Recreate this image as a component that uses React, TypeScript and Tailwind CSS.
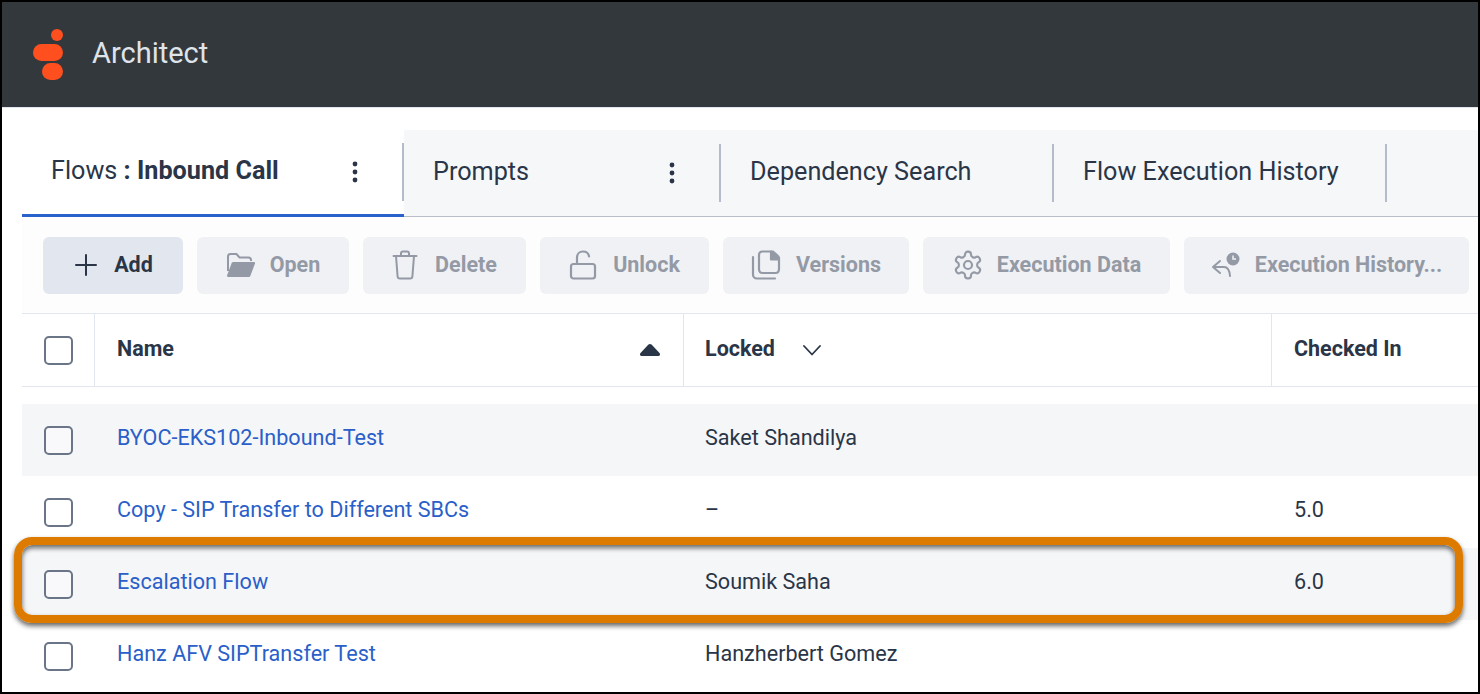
const Logo = () => (
  <svg width="32" height="52" viewBox="0 0 32 52" className="shrink-0">
    <circle cx="24" cy="6" r="6" fill="#ff4f1f" />
    <rect x="0" y="15" width="30" height="17" rx="8.5" fill="#ff4f1f" />
    <rect x="9" y="34" width="21" height="17" rx="8.5" fill="#ff4f1f" />
  </svg>
);

const Kebab = () => (
  <svg width="6" height="22" viewBox="0 0 6 22" className="shrink-0">
    <circle cx="3" cy="3" r="2.4" fill="#2a3547" />
    <circle cx="3" cy="11" r="2.4" fill="#2a3547" />
    <circle cx="3" cy="19" r="2.4" fill="#2a3547" />
  </svg>
);

const PlusIcon = () => (
  <svg width="22" height="22" viewBox="0 0 22 22" fill="none" stroke="#2a3547" strokeWidth="2" strokeLinecap="round">
    <path d="M11 1v20M1 11h20" />
  </svg>
);

const FolderIcon = () => (
  <svg width="30" height="28" viewBox="0 0 30 28" fill="none">
    <path d="M2 20V5.5C2 4 3 3 4.5 3h6l3 3.5h9c1.5 0 2.5 1 2.5 2.5v1" stroke="#949aa5" strokeWidth="2" />
    <path d="M1 24.5c0 1 .8 1.5 1.7 1.5h19.8c1 0 1.6-.5 2-1.5L29 12.5c.3-1-.3-1.5-1.2-1.5H7.5c-1 0-1.6.5-2 1.5L1 24.5z" fill="#949aa5" />
  </svg>
);

const TrashIcon = () => (
  <svg width="26" height="30" viewBox="0 0 26 30" fill="none" stroke="#949aa5" strokeWidth="2" strokeLinecap="round" strokeLinejoin="round">
    <path d="M1.5 6h23" />
    <path d="M9 6V3.5C9 2 10 1.5 11 1.5h4c1 0 2 .5 2 2V6" />
    <path d="M4 6l1.6 20.5c.1 1.2 1 2 2.2 2h10.4c1.2 0 2.1-.8 2.2-2L22 6" />
  </svg>
);

const UnlockIcon = () => (
  <svg width="28" height="30" viewBox="0 0 28 30" fill="none" stroke="#949aa5" strokeWidth="2.2" strokeLinecap="round" strokeLinejoin="round">
    <rect x="2" y="14" width="24" height="14.5" rx="2.5" />
    <path d="M8 14V7.5C8 4 10.5 1.5 14 1.5s5.6 2 6 4.8" />
  </svg>
);

const VersionsIcon = () => (
  <svg width="30" height="30" viewBox="0 0 30 30" fill="none" stroke="#949aa5" strokeWidth="2.2" strokeLinejoin="round">
    <path d="M2 7v17.5C2 26.5 3.5 28.5 6 28.5h18" strokeLinecap="round" />
    <path d="M8 5c0-2 1.2-3.5 3.500-3.5H20l8 8V19c0 2.200-1.300 4-3.500 4h-13C9.300 23 8 21.200 8 19V5z" />
    <path d="M20 1.500h2c0 0 6 5 6 6v2h-8z" fill="#949aa5" />
  </svg>
);

const GearIcon = () => (
  <svg width="32" height="32" viewBox="0 0 24 24" fill="none" stroke="#949aa5" strokeWidth="1.6" strokeLinecap="round" strokeLinejoin="round">
    <path d="M12.22 2h-.44a2 2 0 0 0-2 2v.18a2 2 0 0 1-1 1.73l-.43.25a2 2 0 0 1-2 0l-.15-.08a2 2 0 0 0-2.73.73l-.22.38a2 2 0 0 0 .73 2.73l.15.1a2 2 0 0 1 1 1.72v.51a2 2 0 0 1-1 1.74l-.15.09a2 2 0 0 0-.73 2.73l.22.38a2 2 0 0 0 2.73.73l.15-.08a2 2 0 0 1 2 0l.43.25a2 2 0 0 1 1 1.73V20a2 2 0 0 0 2 2h.44a2 2 0 0 0 2-2v-.18a2 2 0 0 1 1-1.73l.43-.25a2 2 0 0 1 2 0l.15.08a2 2 0 0 0 2.73-.73l.22-.39a2 2 0 0 0-.73-2.73l-.15-.08a2 2 0 0 1-1-1.74v-.5a2 2 0 0 1 1-1.74l.15-.09a2 2 0 0 0 .73-2.73l-.22-.38a2 2 0 0 0-2.73-.73l-.15.08a2 2 0 0 1-2 0l-.43-.25a2 2 0 0 1-1-1.73V4a2 2 0 0 0-2-2z" />
    <circle cx="12" cy="12" r="3" />
  </svg>
);

const HistoryIcon = () => (
  <svg width="30" height="26" viewBox="0 0 30 26" fill="none">
    <path d="M9 9l-7 6 7 6M2 15h11c3.500 0 5.500 3 6 9" stroke="#949aa5" strokeWidth="2" strokeLinecap="round" strokeLinejoin="round" />
    <circle cx="22" cy="7" r="6.500" fill="#949aa5" />
    <path d="M22 3.500V7h3" stroke="#f0f1f5" strokeWidth="1.500" fill="none" />
  </svg>
);

const SortUp = () => (
  <svg width="22" height="14" viewBox="0 0 22 14">
    <path d="M9.500 1.500c.8-.8 2.200-.8 3 0l8 8.500c1 1.100.5 3-1.200 3H2.700C1 13 .5 11.100 1.500 10z" fill="#2a3547" />
  </svg>
);

const Chevron = () => (
  <svg width="18" height="11" viewBox="0 0 18 11" fill="none" stroke="#2a3547" strokeWidth="1.800" strokeLinecap="round" strokeLinejoin="round">
    <path d="M1 1l8 8.500L17 1" />
  </svg>
);

const Checkbox = () => <div className="h-[29px] w-[29px] rounded-[5px] border-[2.5px] border-[#6b7588] bg-white/40" />;

const Tab = ({ width, children, kebab }: { width: string; children: React.ReactNode; kebab?: boolean }) => (
  <div className={`flex h-full items-center pl-[29px] ${width}`}>
    <div className="flex-1 whitespace-nowrap pb-[3px]">{children}</div>
    {kebab && (
      <div className="mr-[44px]">
        <Kebab />
      </div>
    )}
    <div className="h-[58px] w-[2px] bg-[#b4bbca]" />
  </div>
);

const TOOLBAR = [
  { label: 'Open', width: 'w-[152px]', gap: 'gap-[14px]', icon: <FolderIcon /> },
  { label: 'Delete', width: 'w-[163px]', gap: 'gap-[17px]', icon: <TrashIcon /> },
  { label: 'Unlock', width: 'w-[169px]', gap: 'gap-[16px]', icon: <UnlockIcon /> },
  { label: 'Versions', width: 'w-[186px]', gap: 'gap-[15px]', icon: <VersionsIcon /> },
  { label: 'Execution Data', width: 'w-[247px]', gap: 'gap-[13px]', icon: <GearIcon /> },
  { label: 'Execution History...', width: 'w-[285px]', gap: 'gap-[14px]', icon: <HistoryIcon /> },
];

const ROWS = [
  { name: 'BYOC-EKS102-Inbound-Test', locked: 'Saket Shandilya', version: '', shaded: true },
  { name: 'Copy - SIP Transfer to Different SBCs', locked: '–', version: '5.0', shaded: false },
  { name: 'Escalation Flow', locked: 'Soumik Saha', version: '6.0', shaded: true },
  { name: 'Hanz AFV SIPTransfer Test', locked: 'Hanzherbert Gomez', version: '', shaded: false },
];

const COLS = 'grid grid-cols-[73px_589px_588px_1fr]';

export default function App() {
  return (
    <div className="relative flex h-[694px] w-[1480px] flex-col overflow-hidden border-2 border-black bg-white font-['Roboto',sans-serif] text-[#2a3547]">
      {/* Header */}
      <div className="flex h-[106px] shrink-0 items-center gap-[27px] border-b border-[#e2e6ee] bg-[#33383d] pl-[31px]">
        <Logo />
        <span className="pb-px text-[29px] text-[#dfe3ea]">Architect</span>
      </div>

      <div className="flex flex-1 flex-col pl-5 pt-[22px]">
        {/* Tabs */}
        <div className="flex h-[87px] shrink-0 border-b border-[#b8bec8] bg-[#f6f7f9] text-[25.2px]">
          <div className="flex h-[87px] w-[382px] items-center border-b-[3px] border-[#2a62cc] bg-white pl-[29px]">
            <div className="flex-1 whitespace-nowrap pb-[2px]">
              Flows <b className="font-bold">: Inbound Call</b>
            </div>
            <div className="mr-[44px]">
              <Kebab />
            </div>
            <div className="h-[58px] w-[2px] bg-[#b4bbca]" />
          </div>
          <Tab width="w-[317px]" kebab>
            Prompts
          </Tab>
          <Tab width="w-[333px]">Dependency Search</Tab>
          <Tab width="w-[333px]">Flow Execution History</Tab>
        </div>

        {/* Toolbar */}
        <div className="flex h-[96px] shrink-0 items-center gap-[14px] bg-[#fdfdfe] pl-[21px] text-[21.5px] font-bold">
          <button className="flex h-[57px] w-[140px] items-center justify-center gap-[17px] rounded-md bg-[#e2e6ee] pl-[2px]">
            <PlusIcon />
            Add
          </button>
          {TOOLBAR.map((item) => (
            <button
              key={item.label}
              className={`flex h-[57px] shrink-0 items-center justify-center rounded-md bg-[#f0f1f5] text-[#949aa5] ${item.width} ${item.gap}`}
            >
              {item.icon}
              {item.label}
            </button>
          ))}
        </div>

        {/* Table header */}
        <div className={`${COLS} h-[74px] shrink-0 border-y border-[#e2e6ee] text-[21.5px] font-bold`}>
          <div className="flex items-center border-r border-[#e2e6ee] pl-[22px]">
            <Checkbox />
          </div>
          <div className="flex items-center justify-between border-r border-[#e2e6ee] pl-[22px] pr-[22px]">
            <span className="pb-[2px]">Name</span>
            <SortUp />
          </div>
          <div className="flex items-center gap-[28px] border-r border-[#e2e6ee] pl-[21px]">
            <span className="pb-[2px]">Locked</span>
            <Chevron />
          </div>
          <div className="flex items-center pb-[2px] pl-[22px]">Checked In</div>
        </div>

        {/* Rows */}
        <div className="pt-[17px] text-[21.6px]">
          {ROWS.map((row) => (
            <div key={row.name} className={`${COLS} h-[72px] ${row.shaded ? 'bg-[#f5f6f8]' : 'bg-white'}`}>
              <div className="flex items-center pl-[22px]">
                <Checkbox />
              </div>
              <div className="flex items-center pb-[3px] pl-[22px] text-[#2a5fc9]">{row.name}</div>
              <div className="flex items-center pb-[3px] pl-[21px]">{row.locked}</div>
              <div className="flex items-center pb-[3px] pl-[22px]">{row.version}</div>
            </div>
          ))}
        </div>
      </div>

      {/* Highlight callout */}
      <div className="absolute left-[12px] top-[535px] h-[86px] w-[1449px] rounded-[18px] border-[8px] border-[#dd7a00] shadow-[0_3px_5px_rgba(0,0,0,0.6),inset_0_3px_5px_rgba(0,0,0,0.6)]" />
    </div>
  );
}
